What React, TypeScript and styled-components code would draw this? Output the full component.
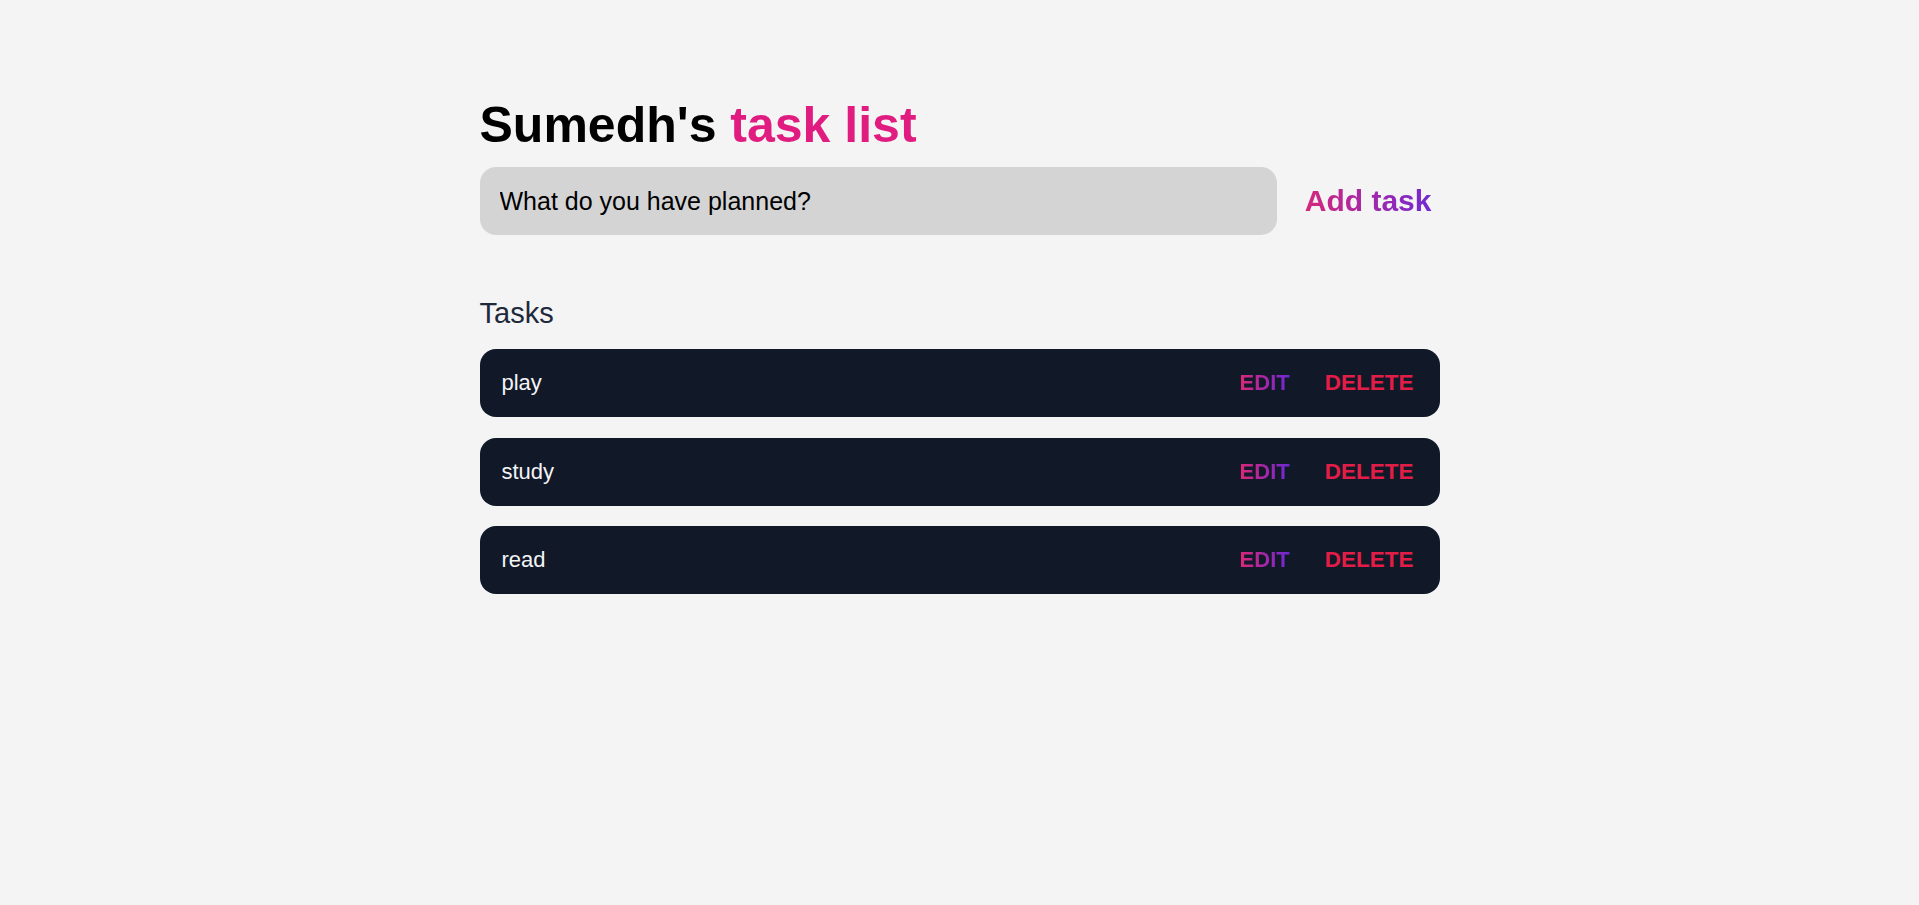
import React from "react";
import styled, { createGlobalStyle } from "styled-components";

const GlobalStyle = createGlobalStyle`
  html, body {
    margin: 0;
    padding: 0;
    background: #f4f4f4;
    font-family: "Liberation Sans", Arial, sans-serif;
  }
  * { box-sizing: border-box; }
`;

const Page = styled.main`
  min-height: 905px;
  display: flex;
  justify-content: center;
  padding-top: 97px;
`;

const Container = styled.div`
  width: 960px;
  display: flex;
  flex-direction: column;
`;

const Title = styled.h1`
  margin: 0;
  font-size: 50px;
  line-height: 57px;
  font-weight: 700;
  color: #000;
`;

const Accent = styled.span`
  color: #e01c80;
`;

const Form = styled.form`
  margin-top: 13px;
  display: flex;
  align-items: center;
  gap: 20px;
`;

const Input = styled.input`
  flex: 1;
  height: 68px;
  border: none;
  outline: none;
  border-radius: 16px;
  background: #d4d4d4;
  padding: 0 20px;
  font-family: "Liberation Sans", Arial, sans-serif;
  font-size: 25px;
  color: #000;
  &::placeholder {
    color: #000;
    opacity: 1;
  }
`;

const GradientButton = styled.button<{ $size: number }>`
  border: none;
  background: linear-gradient(to right, #db2777, #6d28d9);
  -webkit-background-clip: text;
  background-clip: text;
  -webkit-text-fill-color: transparent;
  color: transparent;
  font-family: "Liberation Sans", Arial, sans-serif;
  font-weight: 700;
  font-size: ${(p) => p.$size}px;
  padding: 0 ${(p) => (p.$size > 24 ? 8 : 0)}px;
  cursor: pointer;
`;

const SectionTitle = styled.h2`
  margin: 62px 0 0;
  font-size: 29px;
  line-height: 32px;
  font-weight: 400;
  color: #1e293b;
`;

const List = styled.ul`
  list-style: none;
  margin: 20px 0 0;
  padding: 0;
  display: flex;
  flex-direction: column;
  gap: 20.5px;
`;

const Row = styled.li`
  height: 68px;
  display: flex;
  align-items: center;
  justify-content: space-between;
  background: #111827;
  border-radius: 16px;
  padding: 0 26px 0 22px;
`;

const TaskName = styled.span`
  color: #f3f4f6;
  font-size: 22px;
`;

const Actions = styled.div`
  display: flex;
  align-items: center;
  gap: 35px;
`;

const DeleteButton = styled.button`
  border: none;
  background: none;
  padding: 0;
  color: #e11d48;
  font-family: "Liberation Sans", Arial, sans-serif;
  font-weight: 700;
  font-size: 22.5px;
  cursor: pointer;
`;

const tasks = ["play", "study", "read"];

export default function App() {
  return (
    <>
      <GlobalStyle />
      <Page>
        <Container>
          <Title>
            Sumedh's <Accent>task list</Accent>
          </Title>
          <Form onSubmit={(e) => e.preventDefault()}>
            <Input placeholder="What do you have planned?" />
            <GradientButton $size={30} type="submit">
              Add task
            </GradientButton>
          </Form>
          <SectionTitle>Tasks</SectionTitle>
          <List>
            {tasks.map((t) => (
              <Row key={t}>
                <TaskName>{t}</TaskName>
                <Actions>
                  <GradientButton $size={22} type="button">
                    EDIT
                  </GradientButton>
                  <DeleteButton type="button">DELETE</DeleteButton>
                </Actions>
              </Row>
            ))}
          </List>
        </Container>
      </Page>
    </>
  );
}
